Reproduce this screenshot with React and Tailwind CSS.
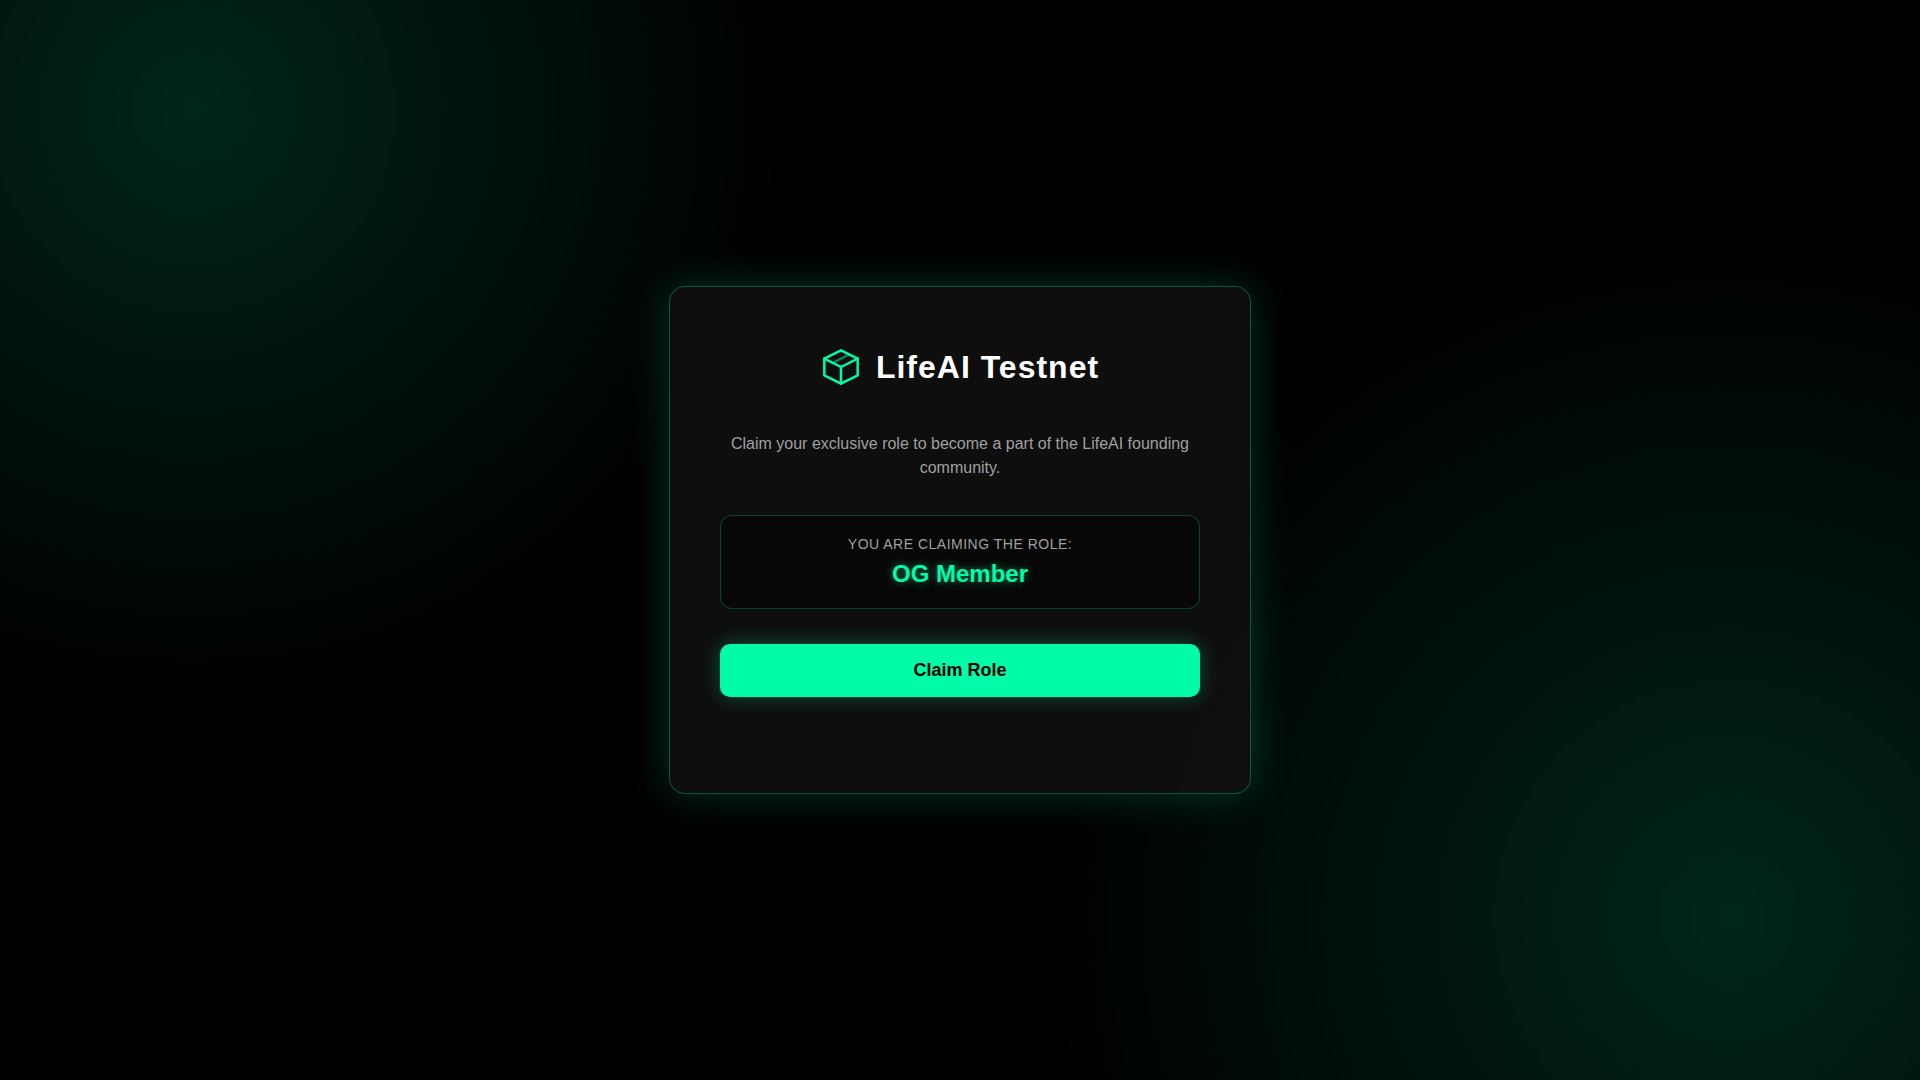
function CubeIcon() {
  return (
    <svg className="size-10 shrink-0" viewBox="0 0 24 24" fill="none" stroke="#00fca8" strokeWidth="1.5" strokeLinecap="round" strokeLinejoin="round" aria-hidden="true">
      <path d="M12 2L2 7V17L12 22L22 17V7L12 2Z" />
      <path d="M2 7L12 12L22 7" />
      <path d="M12 22V12" />
      <path d="M17 4.5L7 9.5" strokeOpacity="0.5" />
    </svg>
  );
}

export default function App() {
  return (
    <main className="flex min-h-screen items-center justify-center bg-black bg-[radial-gradient(circle_at_10%_10%,rgba(0,252,168,0.15),transparent_30%),radial-gradient(circle_at_90%_85%,rgba(0,252,168,0.15),transparent_35%)] px-4 font-['Liberation_Sans',Arial,sans-serif]">
      <section className="w-full max-w-[582px] rounded-2xl border border-[#00fca8]/30 bg-[#111111]/85 px-[50px] pt-[60px] pb-24 text-center shadow-[0_0_40px_rgba(0,252,168,0.2)]">
        <header className="flex items-center justify-center gap-[15px]">
          <CubeIcon />
          <h1 className="text-[32px] leading-10 font-bold tracking-[1px] text-white">LifeAI Testnet</h1>
        </header>
        <p className="mt-[45px] text-base leading-6 text-[#a0a0a0]">
          Claim your exclusive role to become a part of the LifeAI founding community.
        </p>
        <div className="mt-[35px] rounded-xl border border-[#00fca8]/25 bg-black/45 px-5 pt-[18px] pb-4">
          <p className="text-sm leading-5 tracking-[0.5px] text-[#a0a0a0] uppercase">You are claiming the role:</p>
          <p className="mt-0.5 text-2xl leading-9 font-bold text-[#00fca8] [text-shadow:0_0_10px_rgba(0,252,168,0.5)]">OG Member</p>
        </div>
        <button type="button" className="mt-[35px] w-full cursor-pointer rounded-[10px] bg-[#00fca8] py-4 text-lg leading-[21px] font-bold text-black shadow-[0_0_20px_rgba(0,252,168,0.3)]">
          Claim Role
        </button>
      </section>
    </main>
  );
}
